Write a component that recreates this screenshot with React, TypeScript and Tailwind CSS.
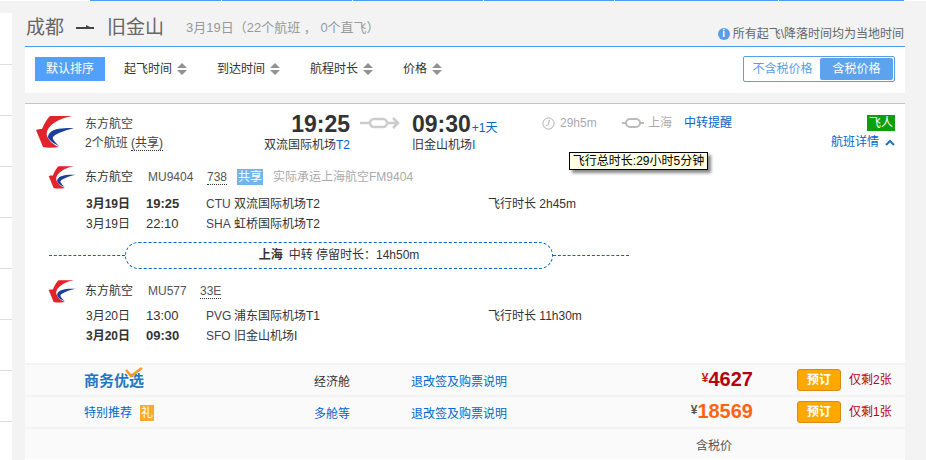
const font = "font-['Liberation_Sans','Noto_Sans_CJK_SC',sans-serif]";

const Logo = ({ className }: { className: string }) => (
  <svg viewBox="0 0 40 32" className={className}>
    <path d="M15 0 H37 C28 2 23 4 19 7 C13 11 11 16 12 20 C14 25 19 29 24 31 C18 32 12 32 8 31 L1 14 C3 13 5 13 7 13 C9 8 12 3 15 0 Z" fill="#e2232b" />
    <path d="M39 12 C30 12 22 12 17 15 C13 18 12 21 14 23 C16 26 20 28 24 30 C20 26 17 23 18 21 C20 18 28 15 39 12 Z" fill="#1d3f9c" />
  </svg>
);

const SortIcon = () => (
  <svg viewBox="0 0 10 12" className="w-[10px] h-[12px] ml-[5px]" fill="#929292">
    <path d="M5 0 L10 5 L0 5 Z M0 7 L10 7 L5 12 Z" />
  </svg>
);

const SortItem = ({ label, width }: { label: string; width: string }) => (
  <div className={`flex items-center text-[12px] text-[#333] ${width}`}>
    {label}
    <SortIcon />
  </div>
);

const SegmentHead = ({ no, plane, share }: { no: string; plane: string; share?: boolean }) => (
  <div className="flex items-center h-[24px] text-[12px] text-[#333]">
    <Logo className="w-[28px] h-[23px] ml-[23px] mr-[9px]" />
    <span className="w-[63px]">东方航空</span>
    <span className={plane === "738" ? "w-[59px] text-[#555]" : "w-[52px] text-[#555]"}>{no}</span>
    <span className="border-b border-dotted border-[#333] leading-[14px] text-[#555]">{plane}</span>
    {share && (
      <>
        <span className="ml-[10px] w-[26px] h-[16px] bg-[#72b4ec] text-white text-center leading-[16px]">共享</span>
        <span className="ml-[10px] text-[#aaa]">实际承运上海航空FM9404</span>
      </>
    )}
  </div>
);

const LegRow = ({ date, time, code, airport, bold, duration }: { date: string; time: string; code: string; airport: string; bold?: boolean; duration?: string }) => (
  <div className="flex items-center h-[20px] text-[12px] text-[#333] pl-[61px]">
    <span className={`w-[60px] ${bold ? "font-bold" : ""}`}>{date}</span>
    <span className={`w-[60px] ${bold ? "font-bold text-[13px]" : "text-[13px]"}`}>{time}</span>
    <span className="w-[28px] text-[#445]">{code}</span>
    <span className="w-[254px]">{airport}</span>
    {duration && <span>飞行时长 {duration}</span>}
  </div>
);

const PriceRow = ({ children, cabin, cabinLink, price, priceColor, yenColor, left }: { children: React.ReactNode; cabin: string; cabinLink?: boolean; price: string; priceColor: string; yenColor: string; left: string }) => (
  <div className="flex items-center h-[32px] pt-[4px] bg-[#fafafa] border-t-[2px] border-[#f3f3f3] text-[12px]">
    <div className="w-[230px] pl-[59px]">{children}</div>
    <div className={`w-[97px] pl-[59px] whitespace-nowrap ${cabinLink ? "text-[#0066cc]" : "text-[#333]"}`}>{cabin}</div>
    <div className="w-[150px] ml-[59px] whitespace-nowrap text-[#0066cc]">退改签及购票说明</div>
    <div className={`w-[193px] ml-[-1px] text-right font-bold text-[20px] leading-[22px] mt-[-7px] ${priceColor}`}>
      <span className={`text-[12px] align-[4px] ${yenColor}`}>¥</span>
      {price}
    </div>
    <button className="ml-[44px] w-[44px] h-[22px] mt-[-4px] rounded-[3px] bg-[#ffa800] border border-[#d98a10] text-white font-bold text-[12px] leading-[20px]">预订</button>
    <span className="ml-[8px] mt-[-4px] text-[#b5000f]">仅剩{left}张</span>
  </div>
);

export default function App() {
  return (
    <div className={`${font} w-[926px] h-[460px] overflow-hidden bg-[#f3f3f3] flex flex-col`}>
      <div className="flex h-[1px] bg-white shrink-0 pl-[90px] gap-[1px]">
        <div className="h-[1px] w-[131px] bg-[#4a9cf5]" />
        <div className="h-[1px] w-[130px] bg-[#4a9cf5]" />
        <div className="h-[1px] w-[130px] bg-[#4a9cf5]" />
        <div className="h-[1px] w-[130px] bg-[#4a9cf5]" />
        <div className="h-[1px] w-[163px] bg-[#4a9cf5]" />
        <div className="h-[1px] w-[125px] bg-[#4a9cf5]" />
      </div>
      <div className="flex flex-1 min-h-0">
        <div className="w-[12px] mt-[12px] pt-[1px] bg-white flex flex-col shrink-0">
          {[0, 1, 2, 3, 4, 5, 6, 7].map((n) => (
            <div key={n} className="h-[51px] border-b border-[#ddd] shrink-0" />
          ))}
        </div>
        <div className="w-[880px] ml-[13px] shrink-0">
          <div className="flex items-center h-[45px] pt-[9px] text-[#777]">
            <span className="text-[19px] text-[#666] w-[50px] ml-[1px] whitespace-nowrap">成都</span>
            <svg viewBox="0 0 18 6" className="w-[18px] h-[6px] mr-[13px]" fill="#444">
              <path d="M0 2 H18 V4 H0 Z M10 0 L14 2 H10 Z" />
            </svg>
            <span className="text-[19px] text-[#666]">旧金山</span>
            <span className="text-[13px] text-[#999] ml-[22px] whitespace-pre">3月19日（22个航班 ， 0个直飞）</span>
            <div className="ml-auto mr-[1px] flex items-center text-[12px] text-[#666] self-end mb-[3px]">
              <span className="w-[12px] h-[12px] rounded-full bg-[#5a9ee8] text-white text-[10px] font-bold leading-[12px] text-center mr-[3px]">i</span>
              所有起飞\降落时间均为当地时间
            </div>
          </div>
          <div className="flex items-center h-[47px] bg-white border-t border-[#4a9cf5] px-[10px] pb-[2px]">
            <div className="w-[70px] h-[24px] bg-[#52a0fa] text-white text-[12px] text-center leading-[24px] mr-[19px]">默认排序</div>
            <SortItem label="起飞时间" width="w-[93px]" />
            <SortItem label="到达时间" width="w-[93px]" />
            <SortItem label="航程时长" width="w-[93px]" />
            <SortItem label="价格" width="w-[60px]" />
            <div className="ml-auto flex items-center h-[26px] w-[152px] border border-[#5a9ee8] rounded-[2px] text-[12px] p-[1px]">
              <span className="w-[75px] text-center text-[#5a9ee8]">不含税价格</span>
              <span className="w-[73px] h-[22px] bg-[#5da2ec] rounded-[2px] text-white text-center leading-[22px]">含税价格</span>
            </div>
          </div>
          <div className="mt-[10px] relative bg-white border-t border-[#c4c4c4] h-[360px]">
            <div className="flex h-[56px] pt-[11px]">
              <Logo className="w-[40px] h-[32px] ml-[10px] mr-[10px] mt-[1px]" />
              <div className="w-[165px] text-[12px] text-[#444] leading-[19px]">
                <div>东方航空</div>
                <div>2个航班 <span className="border-b border-dotted border-[#333]">(共享)</span></div>
              </div>
              <div className="w-[100px] text-right">
                <div className="h-[20px] text-[23px] font-bold text-[#333] leading-[20px] mt-[-1px]">19:25</div>
                <div className="text-[12px] text-[#333] mt-[2px] leading-[18px] whitespace-nowrap">双流国际机场<span className="text-[#0066cc]">T2</span></div>
              </div>
              <div className="w-[62px] pl-[10px]">
                <svg viewBox="0 0 40 14" className="w-[40px] h-[14px] mt-[1px]" fill="none" stroke="#cccccc" strokeWidth="2.5">
                  <path d="M0 7 H10 M27 7 H38 M33 2 L38 7 L33 12" />
                  <rect x="10" y="3" width="17" height="8" rx="4" />
                </svg>
              </div>
              <div className="w-[130px]">
                <div className="h-[20px] text-[23px] font-bold text-[#333] leading-[20px] mt-[-1px] whitespace-nowrap">09:30<span className="text-[12px] font-normal text-[#0066cc] ml-[1px]">+1天</span></div>
                <div className="text-[12px] text-[#333] mt-[2px] leading-[18px]">旧金山机场<span className="text-[#0066cc]">I</span></div>
              </div>
              <div className="flex items-start text-[12px] h-[20px] leading-[18px] mt-[-1px]">
                <svg viewBox="0 0 14 14" className="w-[13px] h-[13px] mt-[3px] mr-[5px]" fill="none" stroke="#a8a8a8">
                  <circle cx="7" cy="7" r="6" />
                  <path d="M8 3 L7 8 L4.5 9.5" />
                </svg>
                <span className="text-[#aaa] w-[62px]">29h5m</span>
                <svg viewBox="0 0 22 10" className="w-[22px] h-[10px] mt-[4px] mr-[4px]" fill="none" stroke="#bbb" strokeWidth="2">
                  <path d="M0 5 H4 M18 5 H22" />
                  <rect x="4" y="1" width="14" height="8" rx="4" />
                </svg>
                <span className="text-[#aaa] w-[36px]">上海</span>
                <span className="text-[#0066cc]">中转提醒</span>
              </div>
              <div className="ml-auto pr-[10px] flex flex-col items-end text-[12px] mt-[-1px]">
                <span className="w-[28px] h-[16px] mt-[1px] bg-[#0ca00c] text-white text-center leading-[16px]">飞人</span>
                <span className="flex items-center text-[#0066cc] mt-[2px] leading-[18px]">
                  航班详情
                  <svg viewBox="0 0 10 7" className="w-[10px] h-[7px] ml-[6px]" fill="none" stroke="#1f6fc4" strokeWidth="2">
                    <path d="M1 6 L5 2 L9 6" />
                  </svg>
                </span>
              </div>
            </div>
            <div className="mt-[5px]">
              <SegmentHead no="MU9404" plane="738" share />
              <div className="mt-[5px]">
                <LegRow date="3月19日" time="19:25" code="CTU" airport="双流国际机场T2" bold duration="2h45m" />
                <LegRow date="3月19日" time="22:10" code="SHA" airport="虹桥国际机场T2" />
              </div>
            </div>
            <div className="flex items-center mt-[7px] ml-[24px] h-[28px] w-[580px]">
              <div className="w-[76px] border-t border-dashed border-[#0066cc]" />
              <div className="w-[428px] h-[27px] rounded-[14px] border border-dashed border-[#0066cc] flex items-center justify-center text-[12px] text-[#333]">
                <span className="font-bold mr-[6px]">上海</span>中转 停留时长：14h50m
              </div>
              <div className="w-[76px] border-t border-dashed border-[#0066cc]" />
            </div>
            <div className="mt-[10px]">
              <SegmentHead no="MU577" plane="33E" />
              <div className="mt-[3px]">
                <LegRow date="3月20日" time="13:00" code="PVG" airport="浦东国际机场T1" duration="11h30m" />
                <LegRow date="3月20日" time="09:30" code="SFO" airport="旧金山机场I" bold />
              </div>
            </div>
            <div className="absolute left-[544px] top-[48px] w-[139px] h-[18px] border border-black bg-[#ffffe1] text-[12px] text-black leading-[16px] text-center whitespace-nowrap shadow-[3px_3px_3px_#888]">
              飞行总时长:29小时5分钟
            </div>
            <div className="mt-[17px]">
              <PriceRow cabin="经济舱" price="4627" priceColor="text-[#b5000f]" yenColor="text-[#c0200f]" left="2">
                <span className="relative block text-[15px] font-bold text-[#2277c4] leading-[18px] mt-[-3px] whitespace-nowrap">
                  商务优选
                  <svg viewBox="0 0 18 11" className="absolute left-[41px] top-[-5px] w-[18px] h-[11px]" fill="none" stroke="#f59a23" strokeWidth="2.5">
                    <path d="M1 3 L6 9 L17 1" />
                  </svg>
                </span>
              </PriceRow>
              <PriceRow cabin="多舱等" cabinLink price="18569" priceColor="text-[#ff6414]" yenColor="text-[#555]" left="1">
                <span className="text-[#0066cc] flex items-center mt-[-2px]">
                  特别推荐
                  <span className="ml-[8px] w-[14px] h-[16px] bg-[#f9a833] text-white text-center leading-[16px]">礼</span>
                </span>
              </PriceRow>
              <div className="h-[32px] bg-[#fafafa] border-t-[2px] border-[#f3f3f3] text-[12px] text-[#555] pl-[671px] leading-[34px]">含税价</div>
            </div>
          </div>
        </div>
      </div>
    </div>
  );
}
